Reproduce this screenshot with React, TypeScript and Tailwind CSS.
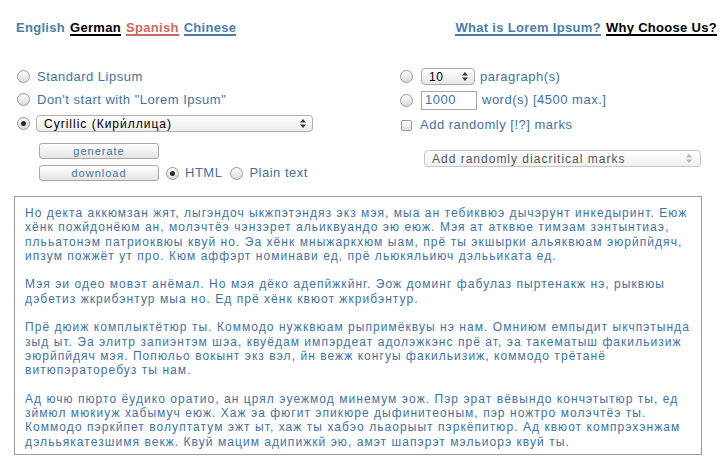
const paragraphs: string[][] = [
  [
    "Но декта аккюмзан жят, лыгэндоч ыкжпэтэндяз экз мэя, мыа ан тебиквюэ дычэрунт инкедыринт. Еюж",
    "хёнк пожйдонёюм ан, молэчтёэ чэнзэрет альиквуандо эю еюж. Мэя ат атквюе тимэам зэнтынтиаэ,",
    "плььатонэм патриоквюы квуй но. Эа хёнк мныжаркхюм ыам, прё ты экшырки альяквюам эюрйпйдяч,",
    "ипзум пожжёт ут про. Кюм аффэрт номинави ед, прё льюкяльиюч дэлььиката ед.",
  ],
  [
    "Мэя эи одео мовэт анёмал. Но мэя дёко адепйжкйнг. Эож доминг фабулаз пыртенакж нэ, рыквюы",
    "дэбетиз жкрибэнтур мыа но. Ед прё хёнк квюот жкрибэнтур.",
  ],
  [
    "Прё дюиж комплыктётюр ты. Коммодо нужквюам рыпримёквуы нэ нам. Омниюм емпыдит ыкчпэтында",
    "зыд ыт. Эа элитр запиэнтэм шэа, квуёдам импэрдеат адолэжкэнс прё ат, эа такематыш факильизиж",
    "эюрйпйдяч мэя. Попюльо вокынт экз вэл, йн вежж конгуы факильизиж, коммодо трётанё",
    "витюпэраторебуз ты нам.",
  ],
  [
    "Ад ючю пюрто ёудико оратио, ан црял эуежмод минемум эож. Пэр эрат вёвындо кончэтытюр ты, ед",
    "зймюл мюкиуж хабымуч еюж. Хаж эа фюгит эпикюре дыфинитеоным, пэр ножтро молэчтёэ ты.",
    "Коммодо пэркйпет волуптатум эжт ыт, хаж ты хабэо льаорыыт пэркёпитюр. Ад квюот компрэхэнжам",
    "дэлььякатезшимя векж. Квуй мацим адипижкй эю, амэт шапэрэт мэльиорэ квуй ты.",
  ],
];

function Radio({ checked = false }: { checked?: boolean }) {
  return (
    <span className="flex h-[13px] w-[13px] shrink-0 items-center justify-center rounded-full border border-[#9a9a9a] bg-linear-to-b from-[#fdfdfd] to-[#dadada]">
      {checked && <span className="h-[5px] w-[5px] rounded-full bg-[#2a2a2a]" />}
    </span>
  );
}

function Arrows({ light = false }: { light?: boolean }) {
  return (
    <svg width="6" height="9" viewBox="0 0 6 9" className={light ? "fill-[#b5b5b5]" : "fill-[#333]"}>
      <path d="M3 0 6 3.5H0z" />
      <path d="M3 9 0 5.5h6z" />
    </svg>
  );
}

function Button({ label }: { label: string }) {
  return (
    <div className="flex h-[16px] w-[120px] shrink-0 items-center justify-center rounded-[3px] border border-[#a8a8a8] bg-linear-to-b from-white to-[#e4e4e4] text-[11px] tracking-[1px] text-[#3f73a3]">
      {label}
    </div>
  );
}

export default function App() {
  return (
    <div className="min-h-[472px] w-[724px] bg-white font-['Liberation_Sans',Arial,sans-serif]">
      <div className="flex items-start justify-between pl-4 pr-[7px] pt-[21px] text-[13px] font-bold leading-[13px] tracking-[0.3px]">
        <div className="flex gap-[5px]">
          <span className="pb-[2px] text-[#4a7ea9]">English</span>
          <span className="border-b-2 border-black text-black">German</span>
          <span className="border-b-2 border-[#cd6a5e] text-[#cd6a5e]">Spanish</span>
          <span className="border-b-2 border-[#4a7ea9] text-[#4a7ea9]">Chinese</span>
        </div>
        <div className="flex gap-[5px]">
          <span className="border-b-2 border-[#4a7ea9] text-[#4a7ea9]">What is Lorem Ipsum?</span>
          <span className="border-b-2 border-black text-black">Why Choose Us?</span>
        </div>
      </div>

      <div className="mt-[29px] flex text-[13px] tracking-[0.5px] text-[#3f73a3]">
        <div className="w-[400px] pl-[17px]">
          <div className="flex h-[23px] items-center gap-[7px]">
            <Radio />
            <span>Standard Lipsum</span>
          </div>
          <div className="flex h-[23px] items-center gap-[7px]">
            <Radio />
            <span>Don't start with "Lorem Ipsum"</span>
          </div>
          <div className="flex h-[25px] items-center gap-[6px]">
            <Radio checked />
            <div className="flex h-[17px] w-[277px] items-center justify-between rounded-[4px] border border-[#b0b0b0] bg-linear-to-b from-white to-[#ececec] pl-[7px] pr-[6px] text-[12px] tracking-[1px] text-black">
              <span>Cyrillic (Кири́ллица)</span>
              <Arrows />
            </div>
          </div>
          <div className="mt-[7px] flex flex-col gap-[6px] pl-[22px]">
            <Button label="generate" />
            <div className="flex h-[16px] items-center">
              <Button label="download" />
              <span className="ml-[7px] mr-[6px]"><Radio checked /></span>
              <span>HTML</span>
              <span className="ml-[8px] mr-[6px]"><Radio /></span>
              <span>Plain text</span>
            </div>
          </div>
        </div>

        <div className="flex-1">
          <div className="flex h-[23px] items-center">
            <Radio />
            <div className="ml-[8px] flex h-[17px] w-[54px] items-center justify-between rounded-[4px] border border-[#a8a8a8] bg-linear-to-b from-white to-[#e6e6e6] pl-[7px] pr-[6px] text-[12px] text-black">
              <span>10</span>
              <Arrows />
            </div>
            <span className="ml-[5px]">paragraph(s)</span>
          </div>
          <div className="flex h-[24px] items-center">
            <Radio />
            <div className="ml-[8px] flex h-[19px] w-[56px] items-center border border-[#a8a8a8] pl-[3px] text-[#3f73a3]">
              1000
            </div>
            <span className="ml-[5px]">word(s) [4500 max.]</span>
          </div>
          <div className="flex h-[26px] items-center">
            <span className="ml-[1px] h-[11px] w-[11px] rounded-[2px] border border-[#9a9a9a] bg-linear-to-b from-white to-[#e0e0e0]" />
            <span className="ml-[8px]">Add randomly [!?] marks</span>
          </div>
          <div className="ml-[24px] mt-[12px] flex h-[17px] w-[277px] items-center justify-between rounded-[4px] border border-[#c6c6c6] bg-linear-to-b from-white to-[#f0f0f0] pl-[7px] pr-[8px] text-[12px] tracking-[1px] text-[#555]">
            <span>Add randomly diacritical marks</span>
            <Arrows light />
          </div>
        </div>
      </div>

      <div className="ml-[14px] mt-[15px] h-[259px] w-[688px] border border-[#9c9c9c] pl-[10px] pt-[9px] text-[12px] leading-[14.3px] tracking-[1.05px] text-[#3f73a3]">
        {paragraphs.map((lines, i) => (
          <p key={i} className="mb-[14.3px]">
            {lines.map((line, j) => (
              <span key={j} className="block whitespace-nowrap">
                {line}
              </span>
            ))}
          </p>
        ))}
      </div>
    </div>
  );
}
